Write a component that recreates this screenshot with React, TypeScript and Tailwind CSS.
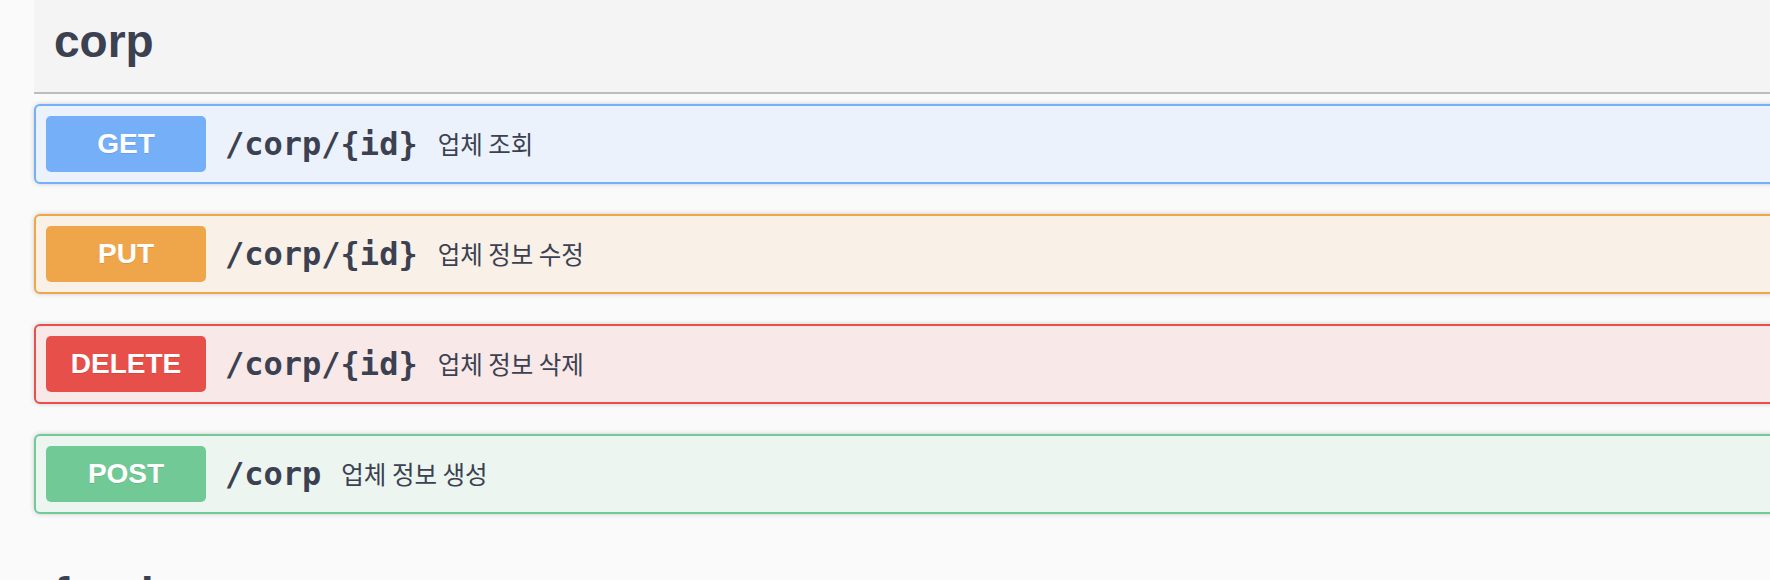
import React from "react";

type Op = {
  method: string;
  path: string;
  summary: string;
  badge: string;
  bg: string;
  border: string;
};

const ops: Op[] = [
  {
    method: "GET",
    path: "/corp/{id}",
    summary: "업체 조회",
    badge: "bg-[#74aff8]",
    bg: "bg-[#ebf2fb]",
    border: "border-[#74aff8]",
  },
  {
    method: "PUT",
    path: "/corp/{id}",
    summary: "업체 정보 수정",
    badge: "bg-[#efa64a]",
    bg: "bg-[#f9f0e7]",
    border: "border-[#efa64a]",
  },
  {
    method: "DELETE",
    path: "/corp/{id}",
    summary: "업체 정보 삭제",
    badge: "bg-[#e7504a]",
    bg: "bg-[#f8e8e7]",
    border: "border-[#e7504a]",
  },
  {
    method: "POST",
    path: "/corp",
    summary: "업체 정보 생성",
    badge: "bg-[#71c995]",
    bg: "bg-[#ecf5ef]",
    border: "border-[#71c995]",
  },
];

function OpBlock({ op }: { op: Op }) {
  return (
    <div
      className={`h-[80px] flex items-center rounded-[6px] border-2 ${op.border} ${op.bg} px-[10px] shadow-[0_0_5px_rgba(0,0,0,0.19)]`}
    >
      <span
        className={`w-[160px] h-[56px] shrink-0 flex items-center justify-center rounded-[5px] ${op.badge} text-white text-[28px] font-bold [text-shadow:0_1px_0_rgba(0,0,0,0.1)]`}
        style={{ fontFamily: '"Liberation Sans", Arial, sans-serif' }}
      >
        {op.method}
      </span>
      <span
        className="ml-[19px] text-[32px] font-bold text-[#3b4151]"
        style={{ fontFamily: '"DejaVu Sans Mono", monospace' }}
      >
        {op.path}
      </span>
      <span
        className="ml-[20px] text-[24.5px] text-[#3b4151]"
        style={{ fontFamily: '"Noto Sans CJK KR", "Noto Sans", sans-serif' }}
      >
        {op.summary}
      </span>
    </div>
  );
}

export default function App() {
  return (
    <div className="w-full h-[580px] overflow-hidden bg-[#fafafa]">
      <div className="ml-[34px] w-[1780px]">
        {/* tag: corp */}
        <div className="h-[94px] bg-[#f4f4f4] border-b-2 border-[#bdbdbf] pl-[20px] pt-[18px]">
          <h3
            className="text-[46px] leading-none font-bold text-[#3b4151]"
            style={{ fontFamily: '"Liberation Sans", Arial, sans-serif' }}
          >
            corp
          </h3>
        </div>

        <div className="mt-[10px] flex flex-col gap-[30px]">
          {ops.map((op) => (
            <OpBlock key={op.method} op={op} />
          ))}
        </div>

        {/* next tag, cut off by the window */}
        <div className="mt-[39px] h-[94px] pl-[20px] pt-[18px]">
          <h3
            className="text-[46px] leading-none font-bold text-[#3b4151]"
            style={{ fontFamily: '"Liberation Sans", Arial, sans-serif' }}
          >
            fund
          </h3>
        </div>
      </div>
    </div>
  );
}
